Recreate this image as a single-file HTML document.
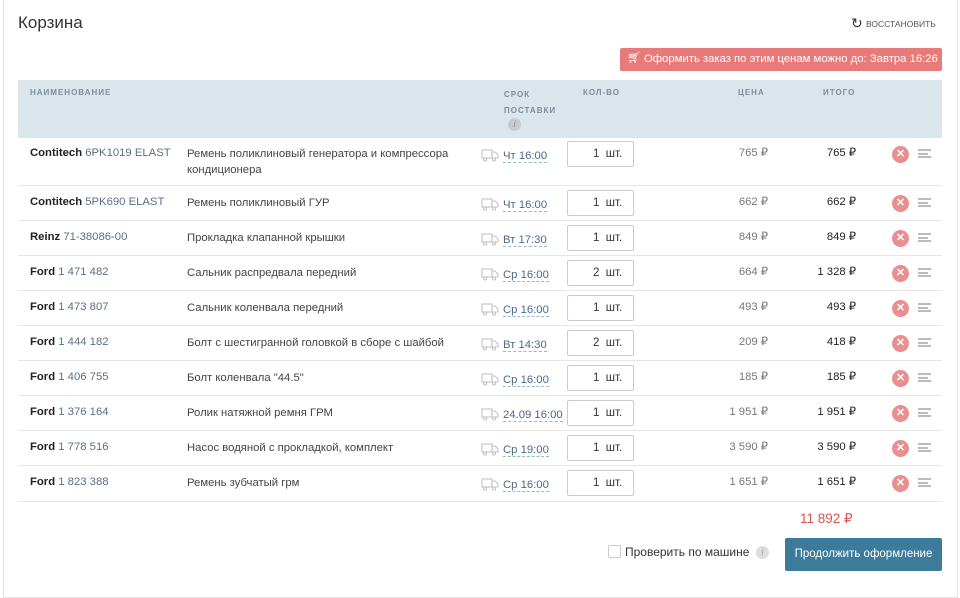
<!DOCTYPE html>
<html><head><meta charset="utf-8"><style>
*{margin:0;padding:0;box-sizing:border-box}
body{width:960px;height:588px;background:#fff;font-family:"Liberation Sans",Arial,sans-serif;position:relative;overflow:hidden;color:#333}
.card{position:absolute;left:3px;top:-2px;width:955px;height:600px;border:1px solid #e4e4e4;background:#fff}
.a{position:absolute;white-space:nowrap}
.hdr{position:absolute;left:18px;top:80px;width:924px;height:58px;background:#dbe6ec}
.h{position:absolute;font-size:8px;font-weight:bold;color:#7d8d99;letter-spacing:1px}
.row{position:absolute;left:18px;width:924px;border-bottom:1px solid #e6e6e6}
.t{font-size:11.3px}
.br{font-weight:bold;color:#222}
.pn{color:#5a6f86}
.ds{color:#444}
.tm{color:#4a6a88;border-bottom:1px dashed #9bb;line-height:13px}
.qb{position:absolute;width:67px;height:26px;border:1px solid #ccc;border-radius:2px;font-size:11.5px;color:#333;padding:6px 0 0 25px}
.pr{color:#777;text-align:right;width:80px}
.tt{color:#222;text-align:right;width:80px}
.x{position:absolute;width:17px;height:17px;border-radius:50%;background:#e8908f;color:#fff;font-weight:bold;font-size:11px;text-align:center;line-height:17px}
.mn{position:absolute;width:13px;height:9px;border-top:2px solid #bbb;border-bottom:2px solid #bbb}
.mn:after{content:"";position:absolute;left:0;top:1.5px;width:10px;height:2px;background:#bbb}
</style></head><body>
<div class="card"></div>
<div class="a" style="left:18px;top:13px;font-size:17px;color:#333">Корзина</div>
<div class="a" style="left:851px;top:15px;font-size:14px;color:#333">↻</div>
<div class="a" style="left:866px;top:19px;font-size:8.5px;color:#555">ВОССТАНОВИТЬ</div>
<div class="a" style="left:620px;top:48px;width:322px;height:23px;background:#e87a7a;border-radius:2px;color:#fff;font-size:11.3px;padding:5px 0 0 24px">Оформить заказ по этим ценам можно до: Завтра 16:26</div>
<div class="a" style="left:627px;top:51px;font-size:11px;color:#fff">🛒︎</div>
<div class="hdr"></div>
<div class="h" style="left:30px;top:88px">НАИМЕНОВАНИЕ</div>
<div class="h" style="left:504px;top:90px">СРОК</div>
<div class="h" style="left:504px;top:106px">ПОСТАВКИ</div>
<div class="a" style="left:508px;top:118px;width:13px;height:13px;border-radius:50%;background:#c5cdd3;color:#888;font-size:9px;font-style:italic;text-align:center;line-height:13px">i</div>
<div class="h" style="left:583px;top:88px">КОЛ-ВО</div>
<div class="h" style="left:738px;top:88px">ЦЕНА</div>
<div class="h" style="left:823px;top:88px">ИТОГО</div>

<div class="row" style="top:138px;height:48px"></div>
<div class="row" style="top:186px;height:35px"></div>
<div class="row" style="top:221px;height:35px"></div>
<div class="row" style="top:256px;height:35px"></div>
<div class="row" style="top:291px;height:35px"></div>
<div class="row" style="top:326px;height:35px"></div>
<div class="row" style="top:361px;height:35px"></div>
<div class="row" style="top:396px;height:35px"></div>
<div class="row" style="top:431px;height:35px"></div>
<div class="row" style="top:466px;height:36px"></div>

<div id="rows"></div>
<script>
var d=[
["Contitech","6PK1019 ELAST","Ремень поликлиновый генератора и компрессора<br>кондиционера","Чт 16:00","1","765 ₽","765 ₽",147],
["Contitech","5PK690 ELAST","Ремень поликлиновый ГУР","Чт 16:00","1","662 ₽","662 ₽",196],
["Reinz","71-38086-00","Прокладка клапанной крышки","Вт 17:30","1","849 ₽","849 ₽",231],
["Ford","1 471 482","Сальник распредвала передний","Ср 16:00","2","664 ₽","1 328 ₽",266],
["Ford","1 473 807","Сальник коленвала передний","Ср 16:00","1","493 ₽","493 ₽",301],
["Ford","1 444 182","Болт с шестигранной головкой в сборе с шайбой","Вт 14:30","2","209 ₽","418 ₽",336],
["Ford","1 406 755","Болт коленвала \"44.5\"","Ср 16:00","1","185 ₽","185 ₽",371],
["Ford","1 376 164","Ролик натяжной ремня ГРМ","24.09 16:00","1","1 951 ₽","1 951 ₽",406],
["Ford","1 778 516","Насос водяной с прокладкой, комплект","Ср 19:00","1","3 590 ₽","3 590 ₽",441],
["Ford","1 823 388","Ремень зубчатый грм","Ср 16:00","1","1 651 ₽","1 651 ₽",476]];
var h="";
d.forEach(function(r){var y=r[7];
h+='<div class="a t" style="left:30px;top:'+y+'px"><span class="br">'+r[0]+'</span> <span class="pn">'+r[1]+'</span></div>';
h+='<div class="a t ds" style="left:187px;top:'+y+'px;line-height:16px;margin-top:-1px">'+r[2]+'</div>';
h+='<svg class="a" style="left:481px;top:'+(y+1)+'px" width="18" height="14" viewBox="0 0 18 14" fill="none" stroke="#c4c4c4" stroke-width="1.1"><rect x="1" y="2" width="10" height="8"/><path d="M11 4h3l3 3v3h-6z"/><circle cx="4" cy="11.5" r="1.5" fill="#fff"/><circle cx="13" cy="11.5" r="1.5" fill="#fff"/></svg>';
h+='<div class="a t" style="left:503px;top:'+(y+3)+'px"><span class="tm">'+r[3]+'</span></div>';
h+='<div class="qb" style="left:567px;top:'+(y-6)+'px">'+r[4]+'&nbsp; шт.</div>';
h+='<div class="a t pr" style="left:688px;top:'+(y-1)+'px">'+r[5]+'</div>';
h+='<div class="a t tt" style="left:776px;top:'+(y-1)+'px">'+r[6]+'</div>';
h+='<div class="x" style="left:892px;top:'+(y-1)+'px">✕</div>';
h+='<div class="mn" style="left:918px;top:'+(y+2)+'px"></div>';
});
document.getElementById("rows").innerHTML=h;
</script>
<div class="a" style="left:800px;top:511px;font-size:13.5px;color:#d9534f">11 892 ₽</div>
<div class="a" style="left:608px;top:545px;width:13px;height:13px;border:1px solid #ccc;border-radius:2px"></div>
<div class="a" style="left:625px;top:545px;font-size:12px;color:#333">Проверить по машине</div>
<div class="a" style="left:756px;top:546px;width:13px;height:13px;border-radius:50%;background:#ddd;color:#999;font-size:9px;font-style:italic;text-align:center;line-height:13px">i</div>
<div class="a" style="left:785px;top:538px;width:157px;height:33px;background:#3d7b9b;border-radius:2px;color:#fff;font-size:11.5px;text-align:center;line-height:33px">Продолжить оформление</div>
</body></html>
